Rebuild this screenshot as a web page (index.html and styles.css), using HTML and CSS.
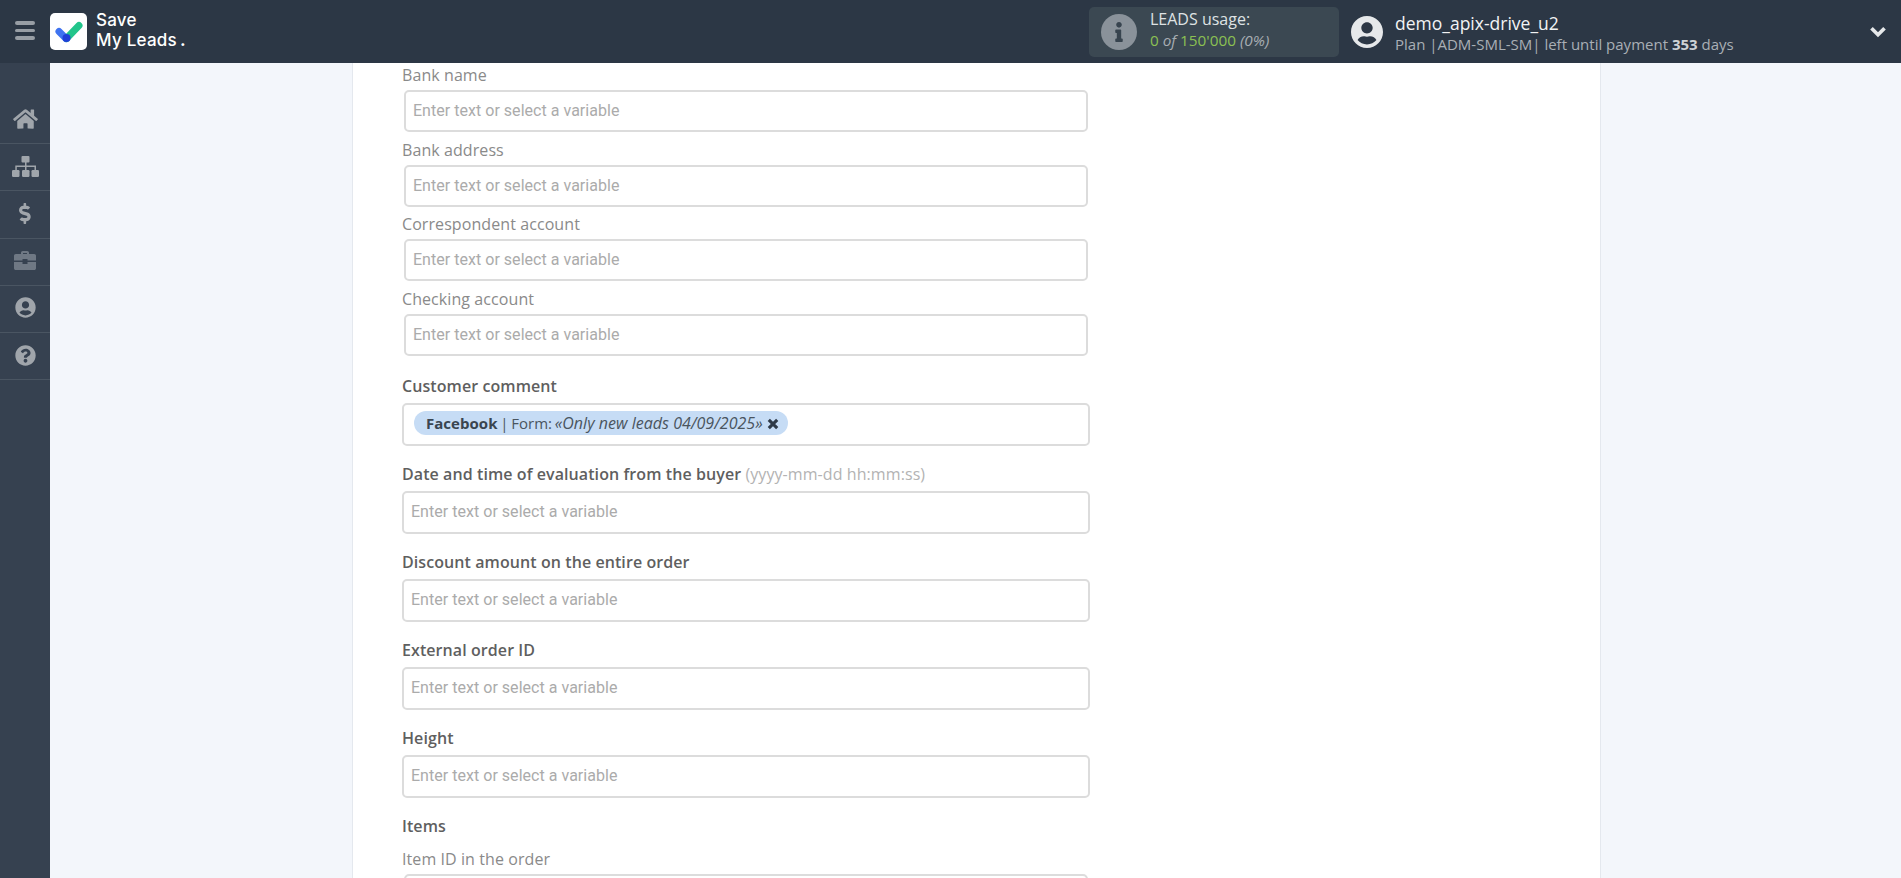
FILE: index.html
```html
<!DOCTYPE html>
<html lang="en">
<head>
<meta charset="utf-8">
<title>Save My Leads</title>
<link rel="stylesheet" href="styles.css">
</head>
<body>
<header class="topbar">
  <button class="burger" aria-label="Menu"><span></span><span></span><span></span></button>
  <div class="logo">
    <svg class="logo-mark" viewBox="0 0 37 37"><rect width="37" height="37" rx="5" fill="#fff"/><path d="M9 18.500l7 7" stroke="#3f73f0" stroke-width="7" stroke-linecap="round"/><path d="M16.500 25.500L29 12.500" stroke="#22c58b" stroke-width="7" stroke-linecap="round"/><circle cx="16.500" cy="25" r="4" fill="#1f3fd8"/></svg>
    <div class="logo-text">Save<br>My Leads<span class="logo-dot">.</span></div>
  </div>
  <div class="usage">
    <svg class="usage-icon" viewBox="0 0 36 36"><circle cx="18" cy="18" r="18" fill="#8a929a"/><svg x="13.500" y="8" width="9" height="20" viewBox="0 0 192 512"><path fill="#38444f" d="M20 424.229h20V279.771H20c-11.046 0-20-8.954-20-20V212c0-11.046 8.954-20 20-20h112c11.046 0 20 8.954 20 20v212.229h20c11.046 0 20 8.954 20 20V492c0 11.046-8.954 20-20 20H20c-11.046 0-20-8.954-20-20v-47.771c0-11.046 8.954-20 20-20zM96 0C56.235 0 24 32.235 24 72s32.235 72 72 72 72-32.235 72-72S135.764 0 96 0z"/></svg></svg>
    <div class="usage-text">
      <div class="usage-title">LEADS usage:</div>
      <div class="usage-value"><span class="green">0</span> <em>of</em> <span class="green">150'000</span> <em>(0%)</em></div>
    </div>
  </div>
  <div class="account">
    <svg class="avatar" viewBox="0 0 496 512"><path fill="#e6e8ea" d="M248 8C111 8 0 119 0 256s111 248 248 248 248-111 248-248S385 8 248 8zm0 96c48.600 0 88 39.400 88 88s-39.400 88-88 88-88-39.400-88-88 39.400-88 88-88zm0 344c-58.700 0-111.300-26.600-146.500-68.200 18.800-35.400 55.600-59.800 98.500-59.800 2.400 0 4.800.4 7.100 1.100 13 4.200 26.600 6.900 40.900 6.900 14.300 0 28-2.700 40.900-6.900 2.300-.7 4.700-1.100 7.100-1.100 42.900 0 79.700 24.400 98.500 59.800C359.300 421.400 306.700 448 248 448z"/></svg>
    <div class="account-text">
      <div class="account-name">demo_apix-drive_u2</div>
      <div class="account-plan">Plan |ADM-SML-SM| left until payment <b>353</b> days</div>
    </div>
  </div>
  <svg class="chevron" viewBox="0 0 16 12"><path d="M2 3l6 6 6-6" fill="none" stroke="#e6e8ea" stroke-width="3.400"/></svg>
</header>
<div class="body">
  <nav class="sidebar">
    <a class="nav-item"><svg class="nav-icon" viewBox="0 0 576 512" width="25" height="22"><path d="M280.37 148.26L96 300.11V464a16 16 0 0 0 16 16l112.06-.29a16 16 0 0 0 15.92-16V368a16 16 0 0 1 16-16h64a16 16 0 0 1 16 16v95.64a16 16 0 0 0 16 16.05L464 480a16 16 0 0 0 16-16V300L295.67 148.26a12.19 12.19 0 0 0-15.3 0zM571.6 251.47L488 182.56V44.05a12 12 0 0 0-12-12h-56a12 12 0 0 0-12 12v72.61L318.47 43a48 48 0 0 0-61 0L4.34 251.47a12 12 0 0 0-1.6 16.9l25.5 31A12 12 0 0 0 45.15 301l235.22-193.74a12.19 12.19 0 0 1 15.3 0L530.9 301a12 12 0 0 0 16.9-1.6l25.5-31a12 12 0 0 0-1.7-16.93z"/></svg></a>
    <a class="nav-item"><svg class="nav-icon" viewBox="0 0 27 21" width="27" height="21"><rect x="9.500" y="0" width="8" height="6.500" rx="1"/><rect x="0" y="14" width="7.500" height="7" rx="1.200"/><rect x="10" y="14" width="7.500" height="7" rx="1.200"/><rect x="19.500" y="14" width="7.500" height="7" rx="1.200"/><path d="M13 6h1.500v3.500H24V14h-1.500v-3H14.500v3H13v-3H4.800v3H3.300V9.500H13z"/></svg></a>
    <a class="nav-item"><svg class="nav-icon" viewBox="0 0 320 512" width="13" height="21"><path d="M209.2 233.4l-108-31.6C88.7 198.2 80 186.5 80 173.5c0-16.3 13.2-29.5 29.5-29.5h66.3c12.2 0 24.2 3.7 34.2 10.5 6.1 4.1 14.3 3.1 19.5-2l34.8-34c7.1-6.9 6.1-18.4-1.8-24.5C238 74.8 207.4 64.1 176 64V16c0-8.8-7.2-16-16-16h-32c-8.800 0-16 7.2-16 16v48h-2.500C45.800 64-5.400 118.700.5 183.600c4.200 46.100 39.400 83.600 83.800 96.600l102.500 30c12.500 3.700 21.200 15.300 21.200 28.300 0 16.300-13.200 29.500-29.500 29.500h-66.300C100 368 88 364.300 78 357.500c-6.100-4.100-14.300-3.100-19.500 2l-34.800 34c-7.100 6.900-6.100 18.400 1.800 24.500 24.500 19.200 55.100 29.900 86.500 30v48c0 8.800 7.200 16 16 16h32c8.800 0 16-7.200 16-16v-48.200c46.600-.9 90.300-28.600 105.700-72.700 21.500-61.600-14.600-124.800-72.500-141.700z"/></svg></a>
    <a class="nav-item"><svg class="nav-icon dim" viewBox="0 0 22 19" width="22" height="19"><path d="M7 3V1.800C7 .8 7.800 0 8.800 0h4.400C14.200 0 15 .8 15 1.800V3h5.200c1 0 1.800.8 1.800 1.800V9.500H13.500V8h-5v1.500H0V4.800C0 3.800.8 3 1.800 3zM9 3h4V2H9zM0 11h8.500v2h5v-2H22v6.200c0 1-.8 1.800-1.800 1.800H1.800C.8 19 0 18.200 0 17.200z"/></svg></a>
    <a class="nav-item"><svg class="nav-icon" viewBox="0 0 496 512" width="21" height="21"><path d="M248 8C111 8 0 119 0 256s111 248 248 248 248-111 248-248S385 8 248 8zm0 96c48.600 0 88 39.400 88 88s-39.400 88-88 88-88-39.400-88-88 39.400-88 88-88zm0 344c-58.700 0-111.300-26.600-146.500-68.200 18.800-35.400 55.600-59.800 98.500-59.800 2.400 0 4.800.4 7.100 1.100 13 4.200 26.600 6.900 40.900 6.900 14.300 0 28-2.700 40.900-6.900 2.300-.7 4.700-1.100 7.100-1.100 42.900 0 79.700 24.400 98.500 59.800C359.300 421.400 306.700 448 248 448z"/></svg></a>
    <a class="nav-item"><svg class="nav-icon" viewBox="0 0 512 512" width="21" height="21"><path d="M504 256c0 136.997-111.043 248-248 248S8 392.997 8 256C8 119.083 119.043 8 256 8s248 111.083 248 248zM262.655 90c-54.497 0-89.255 22.957-116.549 63.758-3.536 5.286-2.353 12.415 2.715 16.258l34.699 26.310c5.205 3.947 12.621 3.008 16.665-2.122 17.864-22.658 30.113-35.797 57.303-35.797 20.429 0 45.698 13.148 45.698 32.958 0 14.976-12.363 22.667-32.534 33.976C247.128 238.528 216 254.941 216 296v4c0 6.627 5.373 12 12 12h56c6.627 0 12-5.373 12-12v-1.333c0-28.462 83.186-29.647 83.186-106.667 0-58.002-60.165-102-116.531-102zM256 338c-25.365 0-46 20.635-46 46 0 25.364 20.635 46 46 46s46-20.636 46-46c0-25.365-20.635-46-46-46z"/></svg></a>
  </nav>
  <main class="main">
    <section class="panel">
      <div class="group"><label class="sub-label">Bank name</label><input class="field small" placeholder="Enter text or select a variable"></div>
      <div class="group"><label class="sub-label">Bank address</label><input class="field small" placeholder="Enter text or select a variable"></div>
      <div class="group"><label class="sub-label">Correspondent account</label><input class="field small" placeholder="Enter text or select a variable"></div>
      <div class="group"><label class="sub-label">Checking account</label><input class="field small" placeholder="Enter text or select a variable"></div>
      <div class="block first"><label class="main-label">Customer comment</label>
        <div class="field chips"><span class="chip"><b>Facebook</b> | Form: <i>«Only new leads 04/09/2025»</i><svg class="chip-x" viewBox="0 0 10 10"><path d="M1.500 1.500l7 7M8.500 1.500l-7 7" stroke="#2f3a48" stroke-width="2.600"/></svg></span></div></div>
      <div class="block"><label class="main-label">Date and time of evaluation from the buyer <span class="hint">(yyyy-mm-dd hh:mm:ss)</span></label><input class="field" placeholder="Enter text or select a variable"></div>
      <div class="block"><label class="main-label">Discount amount on the entire order</label><input class="field" placeholder="Enter text or select a variable"></div>
      <div class="block"><label class="main-label">External order ID</label><input class="field" placeholder="Enter text or select a variable"></div>
      <div class="block"><label class="main-label">Height</label><input class="field" placeholder="Enter text or select a variable"></div>
      <div class="block items"><label class="main-label">Items</label></div>
      <div class="group"><label class="sub-label">Item ID in the order</label><input class="field small" placeholder="Enter text or select a variable"></div>
    </section>
  </main>
</div>
</body>
</html>
```
FILE: styles.css
```css
* { box-sizing: border-box; }
html, body { margin: 0; height: 100%; overflow: hidden; }
body { font-family: "Open Sans", sans-serif; color: #5f5f5f; background: #f3f6fb; display: flex; flex-direction: column; }

.topbar { height: 63px; flex: none; background: #2c3745; display: flex; align-items: center; color: #fff; }
.burger { width: 50px; height: 63px; flex: none; background: none; border: 0; padding: 0 15px 2px; display: flex; flex-direction: column; justify-content: center; gap: 4px; }
.burger span { display: block; height: 3.500px; border-radius: 2px; background: #989ea5; }
.logo { display: flex; align-items: center; gap: 9px; width: 1039px; flex: none; }
.logo-mark { width: 37px; height: 37px; flex: none; }
.logo-text { font-family: Inter, sans-serif; font-weight: 500; font-size: 17px; line-height: 20px; letter-spacing: .25px; color: #fff; margin-top: -3px; }
.logo-dot { margin-left: 3px; font-weight: 700; }

.usage { width: 250px; height: 50px; flex: none; display: flex; align-items: center; gap: 13px; padding-left: 12px; background: #3b4852; border-radius: 5px; }
.usage-icon { width: 36px; height: 36px; flex: none; }
.usage-text { margin-top: -4px; font-size: 15.300px; line-height: 20.500px; color: #cfd3d6; }
.usage-title { font-size: 16px; color: #dfe2e4; }
.usage-value { color: #a8aeb3; }
.usage-value em { font-style: italic; }
.green { color: #8cc152; }

.account { display: flex; align-items: center; gap: 12px; margin-left: 12px; flex: none; width: 518px; }
.avatar { width: 32px; height: 34px; flex: none; }
.account-text { margin-top: 2px; }
.account-name { font-size: 17.500px; line-height: 22px; color: #f2f3f4; }
.account-plan { font-size: 15px; line-height: 20px; color: #a9afb5; white-space: nowrap; }
.account-plan b { color: #cfd3d6; }
.chevron { width: 18px; height: 13px; flex: none; }

.body { flex: 1; min-height: 0; display: flex; }
.sidebar { width: 50px; flex: none; padding-top: 34px; background: #364150; }
.nav-item { display: flex; height: 47.200px; padding-bottom: 2px; align-items: center; justify-content: center; border-bottom: 1px solid #4a5562; }
.nav-icon { fill: #a0a5ab; display: block; }
.nav-icon.dim { fill: #6f7884; }

.main { flex: 1; min-width: 0; padding-left: 302px; padding-right: 300px; overflow: hidden; }
.panel { width: 1249px; height: 100%; background: #fff; border-left: 1px solid #e4e8ee; border-right: 1px solid #e4e8ee; padding: 0 0 0 49px; overflow: hidden; }

.group { height: 74.500px; padding-top: 1px; }
.sub-label { display: block; font-size: 16px; letter-spacing: .08px; line-height: 22px; height: 26px; color: #8a8a8a; }
.main-label { display: block; font-size: 16px; letter-spacing: .08px; line-height: 22px; height: 28px; font-weight: 600; color: #5f5f5f; }
.hint { font-weight: 400; color: #b3b3b3; }

.field { display: block; width: 688px; height: 43px; padding: 0 7px 1px; border: 2px solid #dcdcdc; border-radius: 5px; background: #fff; font-family: Roboto, sans-serif; font-size: 16px; letter-spacing: .03px; outline: 0; }
.field.small { width: 684px; height: 42px; margin-left: 2px; }
.field::placeholder { color: #ababab; opacity: 1; }

.block { height: 88px; }
.block.first { margin-top: 14px; height: 87.500px; }
.block.items { height: 32px; }
.chips { display: flex; align-items: center; padding: 0 10px 3px; }
.chip { display: block; height: 24px; padding: 0 9px 0 12px; border-radius: 12px; background: #c6dcf5; font-family: "Open Sans", sans-serif; font-size: 15px; line-height: 24px; color: #4a5560; white-space: nowrap; word-spacing: -1.200px; }
.chip b { color: #3a4550; }
.chip i { font-size: 16px; word-spacing: 0; }
.chip-x { display: inline-block; width: 12px; height: 12px; margin-left: 4px; vertical-align: -1px; }
```
